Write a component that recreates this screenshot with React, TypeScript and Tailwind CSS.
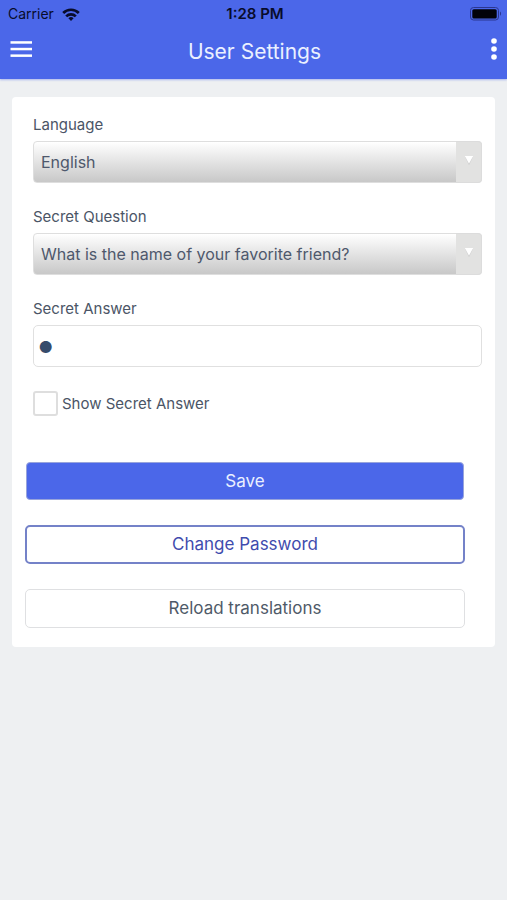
import { useState } from "react";
import type { ReactNode } from "react";

function WifiIcon() {
  return (
    <svg viewBox="0 0 18 13" className="h-[13px] w-[18px]" aria-hidden="true">
      <g fill="none" stroke="currentColor" strokeWidth="2.7">
        <path d="M1.2 5a11 11 0 0 1 15.6 0" />
        <path d="M4.2 8.4a6.8 6.8 0 0 1 9.6 0" />
      </g>
      <path d="M9 12.9 6.4 10.3a3.7 3.7 0 0 1 5.2 0z" fill="currentColor" />
    </svg>
  );
}

function BatteryIcon() {
  return (
    <svg viewBox="0 0 32 14" className="h-[14px] w-[32px]" aria-hidden="true">
      <rect x="0.5" y="0.5" width="28" height="12.5" rx="3" fill="none" stroke="#2b3690" />
      <rect x="2.3" y="2.2" width="24.4" height="9.2" rx="1.5" fill="#02020a" />
      <path d="M30 4.6c1.4.6 1.4 3.6 0 4.2z" fill="#2b3690" />
    </svg>
  );
}

function StatusBar() {
  return (
    <div className="grid h-7 grid-cols-3 items-center pl-2 pr-[5px] text-[#080c2b]">
      <div className="flex items-center gap-2 text-[14px] leading-5">
        <span>Carrier</span>
        <WifiIcon />
      </div>
      <span className="text-center text-[15px] font-semibold leading-5">1:28 PM</span>
      <div className="flex justify-end">
        <BatteryIcon />
      </div>
    </div>
  );
}

function Toolbar() {
  return (
    <div className="grid h-[51px] grid-cols-[1fr_auto_1fr] items-start pl-[10px] pr-2">
      <button type="button" aria-label="Menu" className="mt-3 justify-self-start">
        <svg viewBox="0 0 22 18" className="h-[18px] w-[22px]" fill="white" aria-hidden="true">
          <rect x="0.5" y="1.2" width="21.5" height="2.5" />
          <rect x="0.5" y="7.8" width="21.5" height="2.5" />
          <rect x="0.5" y="14.4" width="21.5" height="2.5" />
        </svg>
      </button>
      <h1 className="mt-[10px] text-[21px] leading-7 text-[#eaf0ff]">User Settings</h1>
      <button type="button" aria-label="More options" className="mt-[10px] justify-self-end">
        <svg viewBox="0 0 10 22" className="h-[22px] w-[10px]" fill="white" aria-hidden="true">
          <circle cx="5" cy="3" r="2.8" />
          <circle cx="5" cy="11" r="2.8" />
          <circle cx="5" cy="19" r="2.8" />
        </svg>
      </button>
    </div>
  );
}

function Field({ id, label, children }: { id: string; label: string; children: ReactNode }) {
  return (
    <div className="flex flex-col gap-[6px]">
      <label htmlFor={id} className="text-[15px] leading-5 text-[#4b5566]">
        {label}
      </label>
      {children}
    </div>
  );
}

function Picker({ id, options }: { id: string; options: string[] }) {
  return (
    <div className="relative">
      <select
        id={id}
        className="block h-[42px] w-full appearance-none rounded-[4px] border border-[#dedede] bg-linear-to-b from-white to-[#c8c8c8] pl-[7px] pr-8 text-[16px] text-[#4e586c]"
      >
        {options.map((option) => (
          <option key={option}>{option}</option>
        ))}
      </select>
      <span className="pointer-events-none absolute inset-y-0 right-0 flex w-[26px] justify-center rounded-r-[4px] border border-l-0 border-[#dcdcdc] bg-[#e2e2e1] pt-[14px]">
        <svg viewBox="0 0 10 9" className="h-[9px] w-[10px]" aria-hidden="true">
          <path d="M1 .8h8L5 9z" fill="#c8c8c8" />
          <path d="M.8 0h8.4L5 7.8z" fill="white" />
        </svg>
      </span>
    </div>
  );
}

export default function App() {
  const [answer, setAnswer] = useState("a");
  const [visible, setVisible] = useState(false);

  return (
    <div className="min-h-screen bg-[#eef0f2] font-['Inter','Liberation_Sans',sans-serif]">
      <header className="bg-[#4b67e9] shadow-[0_1px_2px_#aab6ee]">
        <StatusBar />
        <Toolbar />
      </header>
      <main className="px-3 pt-[18px]">
        <form
          className="rounded-[4px] bg-white px-[13px] pb-[19px] pt-[18px]"
          onSubmit={(event) => event.preventDefault()}
        >
          <div className="flex flex-col gap-6 pl-2">
            <Field id="language" label="Language">
              <Picker id="language" options={["English"]} />
            </Field>
            <Field id="question" label="Secret Question">
              <Picker id="question" options={["What is the name of your favorite friend?"]} />
            </Field>
            <Field id="answer" label="Secret Answer">
              <input
                id="answer"
                type={visible ? "text" : "password"}
                value={answer}
                onChange={(event) => setAnswer(event.target.value)}
                className="h-[42px] w-full rounded-[5px] border border-[#e0e0e0] bg-white px-px pb-1 text-[38px] leading-9 text-[#364b6b]"
              />
            </Field>
            <label className="flex items-center gap-1 text-[15px] leading-5 text-[#4b5566]">
              <input
                type="checkbox"
                checked={visible}
                onChange={(event) => setVisible(event.target.checked)}
                className="size-[25px] appearance-none rounded-[3px] border-2 border-[#dedede] bg-white checked:bg-[#4b67e9]"
              />
              Show Secret Answer
            </label>
          </div>
          <div className="mt-[46px] flex flex-col gap-[25px] pr-[17px] text-[17px]">
            <button
              type="submit"
              className="mx-px h-[38px] rounded-[4px] border border-[#98a4dc] bg-[#4b67e9] pt-px text-[#eaf0ff]"
            >
              Save
            </button>
            <button
              type="button"
              className="h-[39px] rounded-[5px] border-2 border-[#7482c8] bg-white pt-px text-[#3f4cae]"
            >
              Change Password
            </button>
            <button
              type="button"
              className="h-[39px] rounded-[5px] border border-[#dfe0e2] bg-white pt-px text-[#4f5a68]"
            >
              Reload translations
            </button>
          </div>
        </form>
      </main>
    </div>
  );
}
